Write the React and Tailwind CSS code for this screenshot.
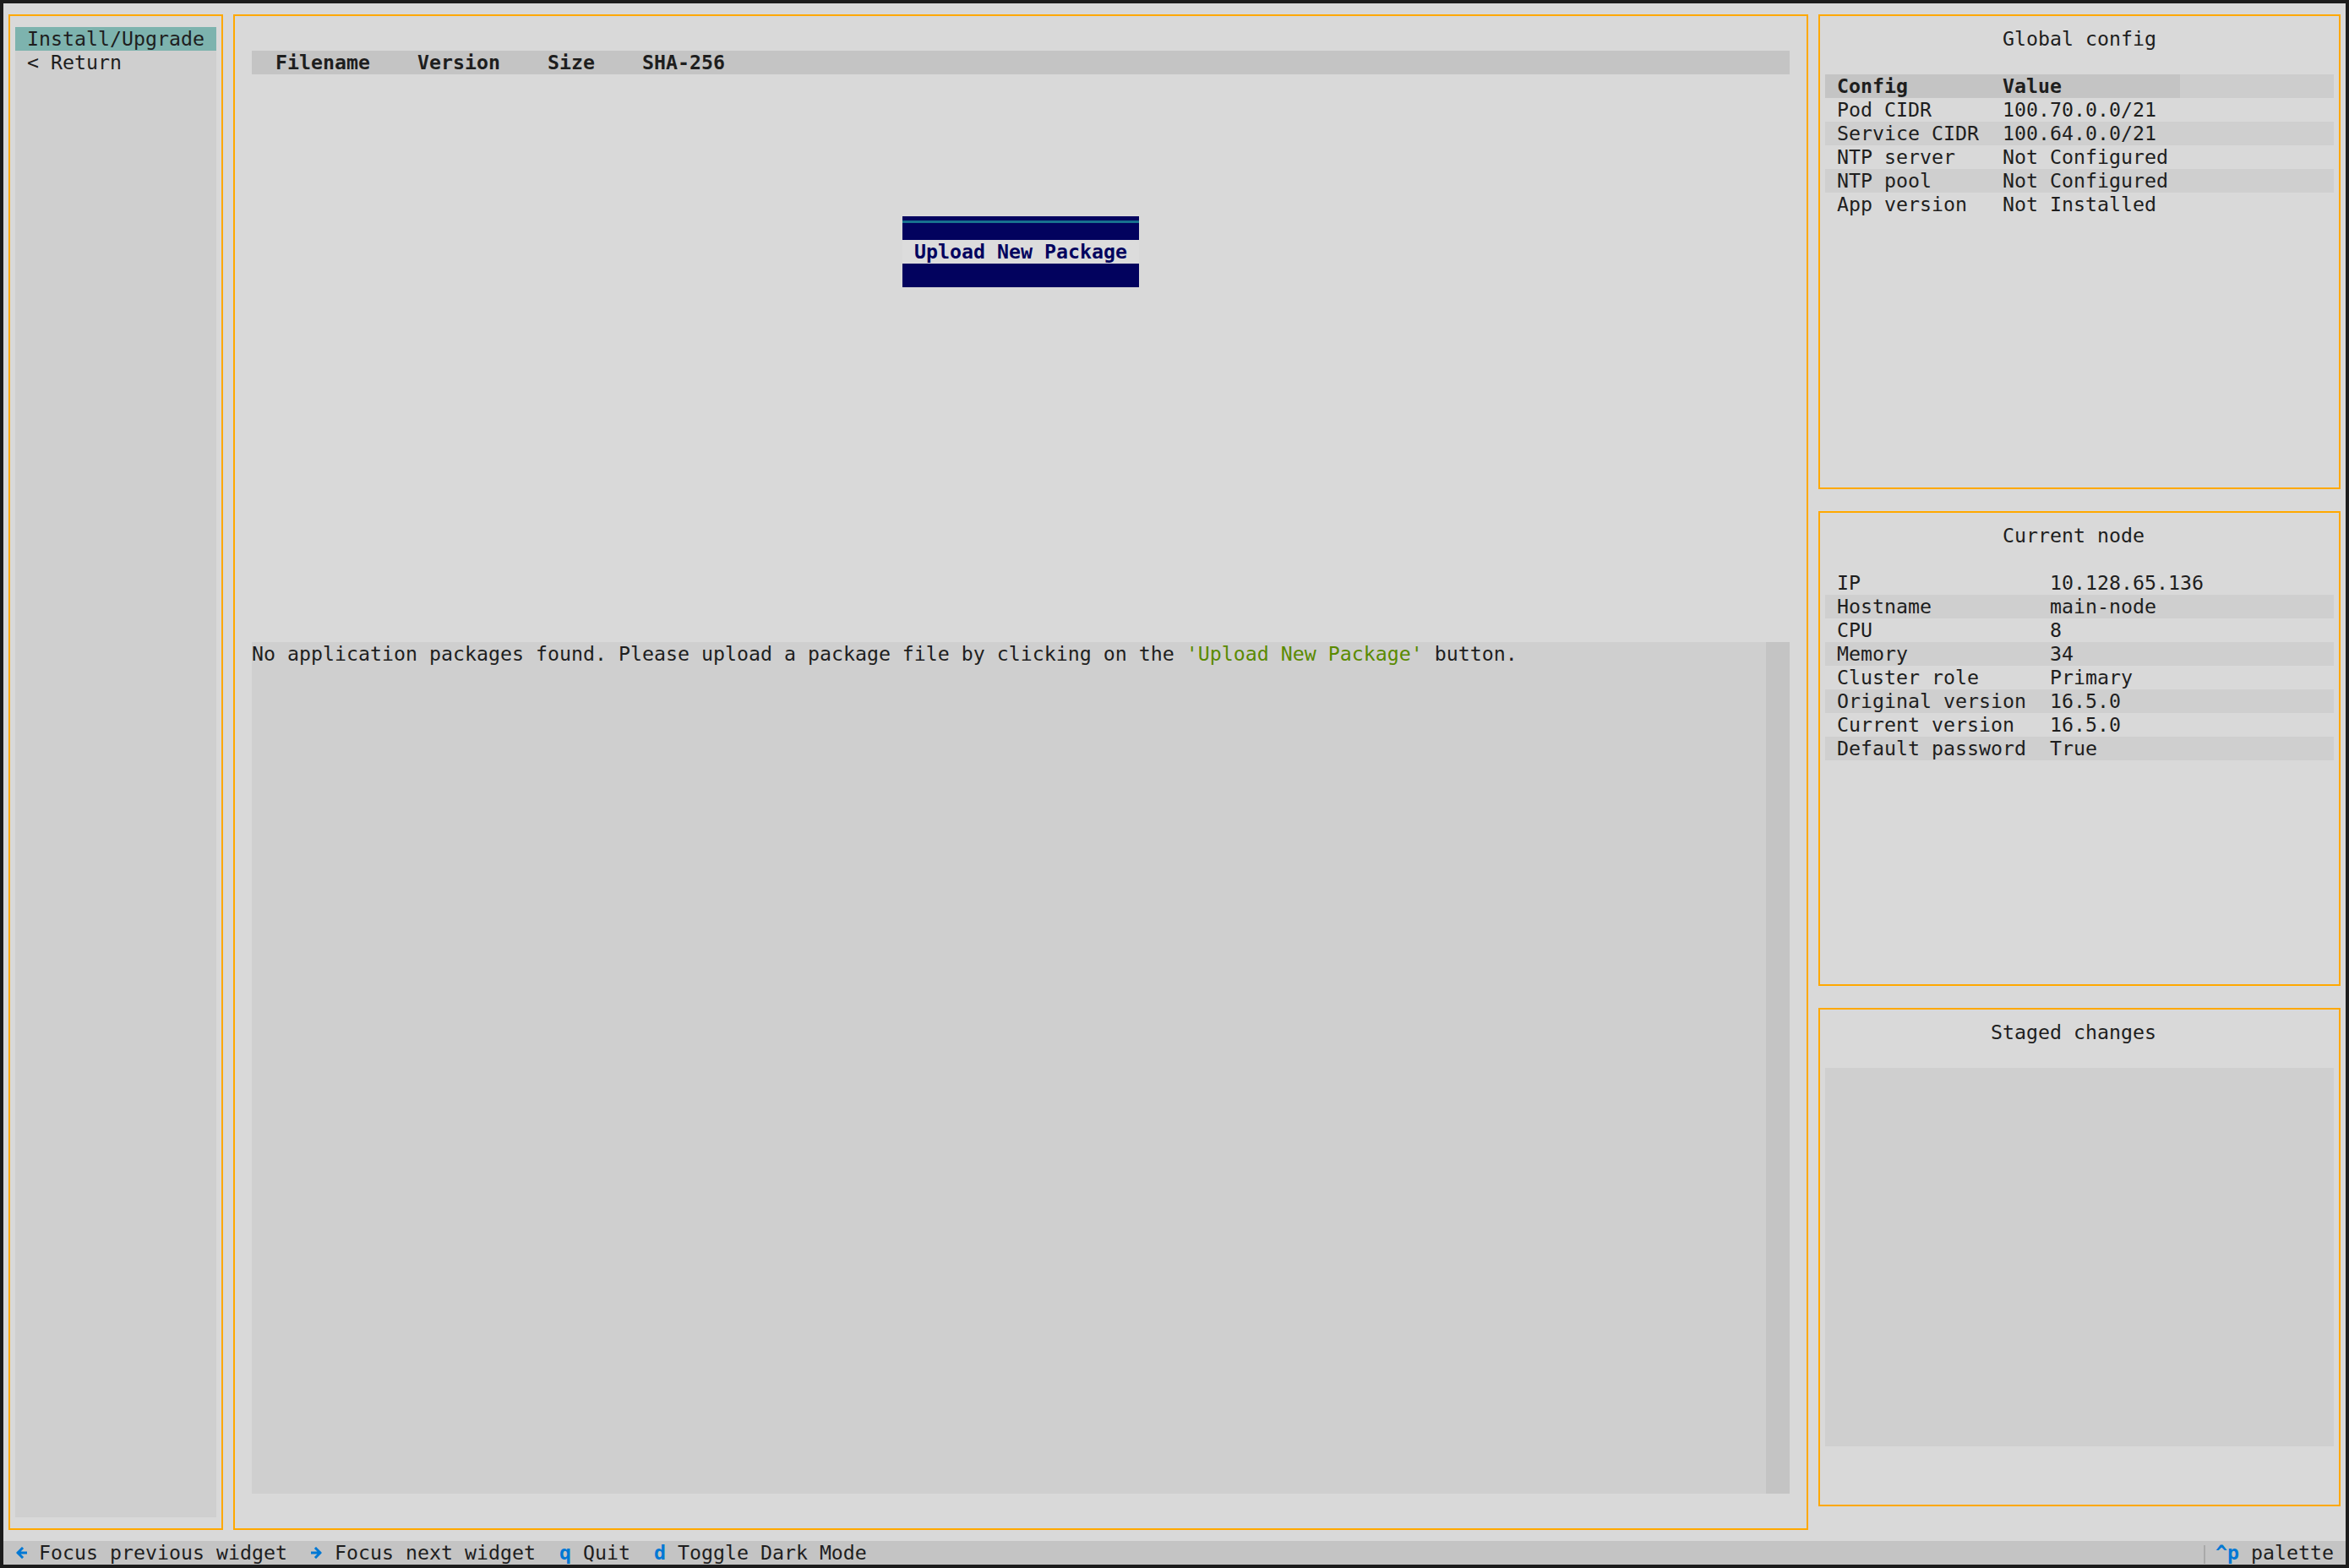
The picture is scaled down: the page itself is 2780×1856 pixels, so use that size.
import React from 'react';

// Terminal grid: 198 cols x 66 rows, cell 14px x 28px

function Panel({ className = '', children }) {
    return (
        <div className={`px-[6px] py-[13px] ${className}`}>
            <div className="h-full border-2 border-[#ffa800] px-[6px] py-[13px]">
                {children}
            </div>
        </div>
    );
}

const globalConfig = [
    ['Pod CIDR', '100.70.0.0/21'],
    ['Service CIDR', '100.64.0.0/21'],
    ['NTP server', 'Not Configured'],
    ['NTP pool', 'Not Configured'],
    ['App version', 'Not Installed'],
];

const currentNode = [
    ['IP', '10.128.65.136'],
    ['Hostname', 'main-node'],
    ['CPU', '8'],
    ['Memory', '34'],
    ['Cluster role', 'Primary'],
    ['Original version', '16.5.0'],
    ['Current version', '16.5.0'],
    ['Default password', 'True'],
];

// chunky terminal arrow, one cell wide
function KeyArrow({ right = false }) {
    return (
        <span className="w-[14px] h-[28px] flex items-center justify-center">
            <svg width="13" height="14" viewBox="0 0 13 14" className={right ? 'rotate-180' : ''}>
                <path d="M7 2 L2 7 L7 12 M2.5 7 H12" fill="none" stroke="#0178d4" strokeWidth="3" strokeLinecap="square" />
            </svg>
        </span>
    );
}

function Sidebar() {
    return (
        <Panel className="w-[266px] h-full">
            <div className="h-full bg-[#cfcfcf]">
                <div className="h-[28px] bg-[#7db3ae] pl-[14px]">Install/Upgrade</div>
                <div className="h-[28px] pl-[14px] whitespace-pre">{'< Return'}</div>
            </div>
        </Panel>
    );
}

function MainPanel() {
    return (
        <Panel className="w-[1876px] h-full">
            <div className="h-full px-[14px] py-[28px] flex flex-col">
                {/* package table header */}
                <div className="h-[28px] bg-[#c4c4c4] font-bold whitespace-pre">
                    {'  Filename    Version    Size    SHA-256'}
                </div>
                <div className="h-[168px]" />

                {/* upload button */}
                <div className="ml-[770px] w-[280px] h-[84px] flex flex-col">
                    <div className="h-[28px] bg-[#02025e] pt-[5px]">
                        <div className="h-[3px] bg-[#17708e]" />
                    </div>
                    <div className="h-[28px] bg-[#dcdcdc] text-center font-bold text-[#02025e]">
                        Upload New Package
                    </div>
                    <div className="h-[28px] bg-[#02025e]" />
                </div>
                <div className="h-[420px]" />

                {/* message log */}
                <div className="h-[1008px] flex bg-[#cfcfcf]">
                    <div className="flex-1 whitespace-pre">
                        No application packages found. Please upload a package file by clicking on the{' '}
                        <span className="text-[#5a8a00]">'Upload New Package'</span> button.
                    </div>
                    <div className="w-[28px] h-full bg-[#c4c4c4]" />
                </div>
            </div>
        </Panel>
    );
}

function RightColumn() {
    return (
        <div className="w-[630px] h-full flex flex-col">
            <Panel className="h-[588px]">
                <div className="h-[28px] pl-[210px]">Global config</div>
                <div className="h-[28px]" />
                <div className="h-[28px] flex bg-[#cdcdcd] font-bold">
                    <div className="w-[196px] bg-[#c4c4c4] pl-[14px]">Config</div>
                    <div className="w-[224px] bg-[#c4c4c4] pl-[14px]">Value</div>
                </div>
                {globalConfig.map(([k, v], i) => (
                    <div key={k} className={`h-[28px] flex whitespace-pre ${i % 2 === 1 ? 'bg-[#cfcfcf]' : ''}`}>
                        <div className="w-[196px] pl-[14px]">{k}</div>
                        <div className="pl-[14px]">{v}</div>
                    </div>
                ))}
            </Panel>

            <Panel className="h-[588px]">
                <div className="h-[28px] pl-[210px]">Current node</div>
                <div className="h-[28px]" />
                {currentNode.map(([k, v], i) => (
                    <div key={k} className={`h-[28px] flex whitespace-pre ${i % 2 === 1 ? 'bg-[#cfcfcf]' : ''}`}>
                        <div className="w-[252px] pl-[14px]">{k}</div>
                        <div className="pl-[14px]">{v}</div>
                    </div>
                ))}
            </Panel>

            <Panel className="h-[616px]">
                <div className="h-[28px] pl-[196px]">Staged changes</div>
                <div className="h-[28px]" />
                <div className="h-[448px] bg-[#cfcfcf]" />
            </Panel>
            <div className="h-[28px]" />
        </div>
    );
}

function Footer() {
    return (
        <div className="h-[28px] flex bg-[#c4c4c4] whitespace-pre">
            <span> </span>
            <KeyArrow />
            <span> Focus previous widget  </span>
            <KeyArrow right />
            <span> Focus next widget  </span>
            <span className="text-[#0178d4] font-bold">q</span>
            <span> Quit  </span>
            <span className="text-[#0178d4] font-bold">d</span>
            <span> Toggle Dark Mode</span>
            <div className="ml-auto w-[168px] flex items-center">
                <div className="w-[14px] h-[22px] mt-[4px] border-l-2 border-[#a9a9a9]" />
                <span className="text-[#0178d4] font-bold">^p</span>
                <span> palette </span>
            </div>
        </div>
    );
}

export default function App() {
    return (
        <div className="w-[2780px] h-[1856px] bg-[#1c1c1c] p-[4px]">
            <div className="w-[2772px] h-[1848px] flex flex-col bg-[#d9d9d9] text-[#1e1e1e] font-['DejaVu_Sans_Mono',monospace] text-[23.25px] leading-[28px]">
                <div className="h-[1820px] flex">
                    <Sidebar />
                    <MainPanel />
                    <RightColumn />
                </div>
                <Footer />
            </div>
        </div>
    );
}
